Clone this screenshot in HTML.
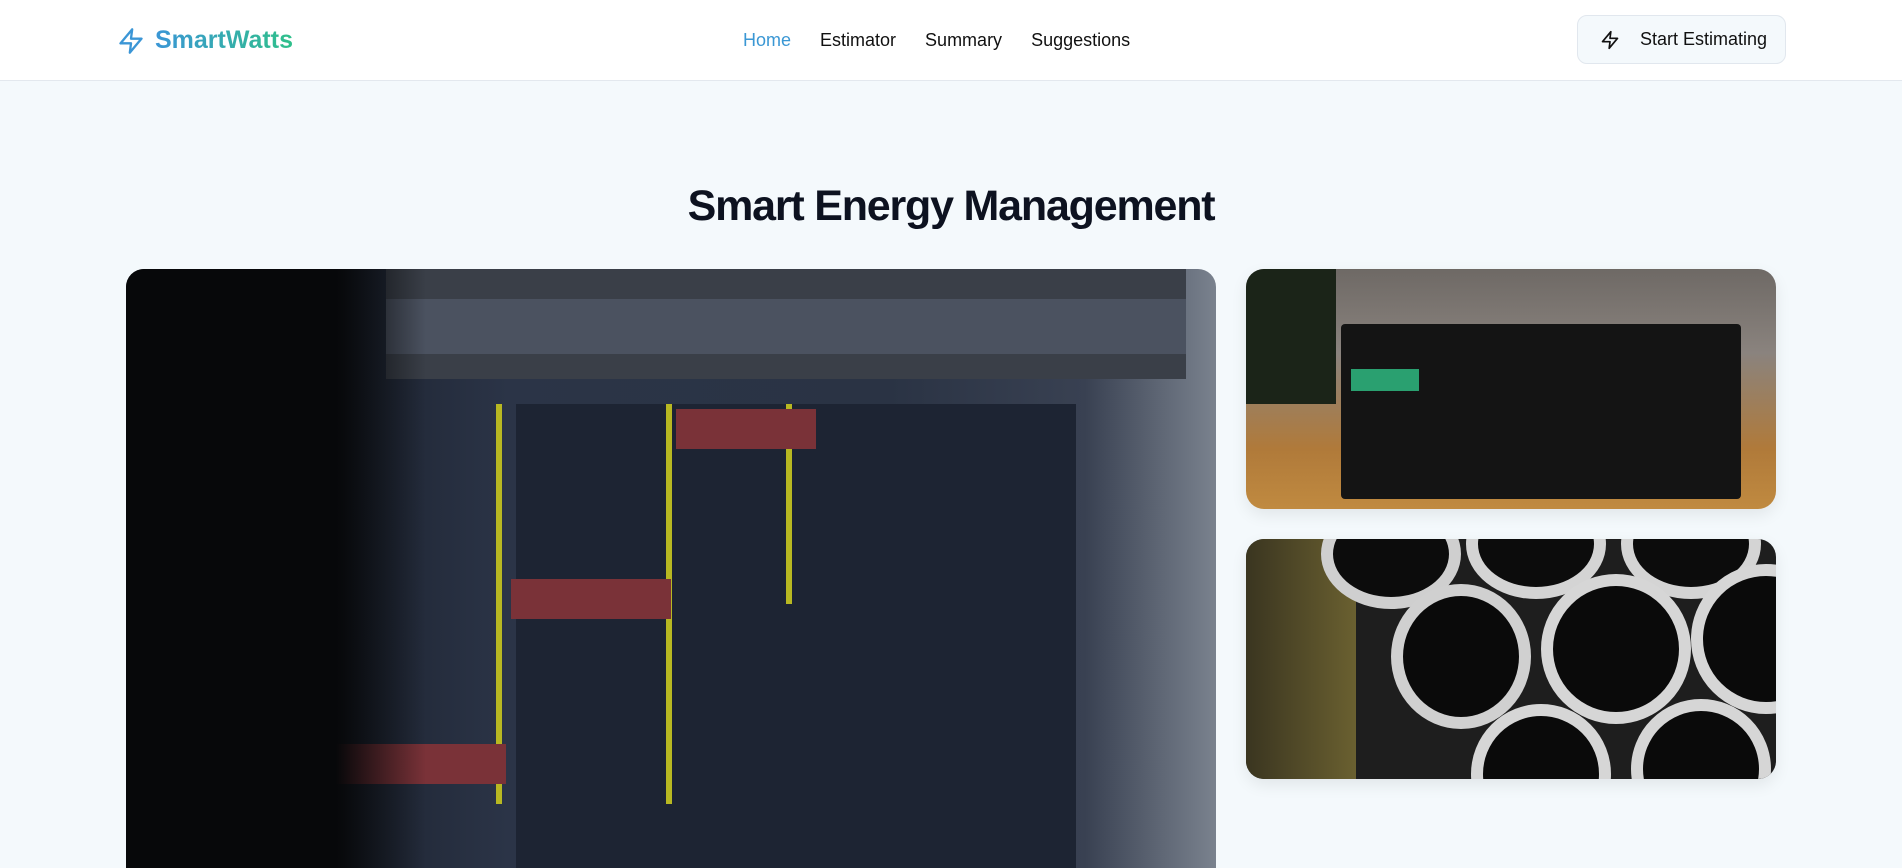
<!DOCTYPE html>
<html><head><meta charset="utf-8"><style>
*{margin:0;padding:0;box-sizing:border-box}
html,body{width:1902px;height:868px;overflow:hidden}
body{background:#f4f9fc;font-family:"Liberation Sans",sans-serif;position:relative}
.hdr{position:absolute;left:0;top:0;width:1902px;height:81px;background:#fff;border-bottom:1px solid #e3e8ee}
.logo{position:absolute;left:117px;top:26px;display:flex;align-items:center;gap:10px;font-weight:bold;font-size:25px}
.logo span{background:linear-gradient(90deg,#3b96d6,#2fc08a);-webkit-background-clip:text;color:transparent}
.nav{position:absolute;top:30px;left:743px;font-size:18px;color:#111;display:flex;gap:29px}
.nav .a{color:#3a97d4}
.btn{position:absolute;left:1577px;top:15px;width:209px;height:49px;border:1px solid #e1e7ee;border-radius:10px;background:#f4f9fc;display:flex;align-items:center;font-size:18px;color:#111}
.btn svg{margin-left:22px;margin-right:20px}
h1{position:absolute;top:182px;left:0;width:1902px;text-align:center;font-size:43px;font-weight:bold;color:#0d1220;letter-spacing:-1.2px}
.main{position:absolute;left:126px;top:269px;width:1090px;height:599px;border-radius:18px 18px 0 0;overflow:hidden;background:linear-gradient(90deg,#0a0c10 0%,#15191f 16%,#1f2634 22%,#2b3447 35%,#2a3344 70%,#394152 88%,#7a828e 100%)}
.r1,.r2{position:absolute;left:1246px;width:530px;height:240px;border-radius:18px;overflow:hidden;box-shadow:0 6px 16px rgba(0,0,0,.08)}
.r1{top:269px;background:linear-gradient(180deg,#6e6965 0%,#8a837e 35%,#b07a3a 75%,#c08a40 100%)}
.r2{top:539px;background:#1e1e1e}
</style></head><body>
<div class="hdr">
<div class="logo"><svg width="28" height="28" viewBox="0 0 24 24" fill="none" stroke="#3b96d6" stroke-width="2" stroke-linejoin="round"><path d="M13 2L3 14h9l-1 8 10-12h-9l1-8z"/></svg><span>SmartWatts</span></div>
<div class="nav"><span class="a">Home</span><span>Estimator</span><span>Summary</span><span>Suggestions</span></div>
<div class="btn"><svg width="20" height="20" viewBox="0 0 24 24" fill="none" stroke="#111" stroke-width="2" stroke-linejoin="round"><path d="M13 2L3 14h9l-1 8 10-12h-9l1-8z"/></svg>Start Estimating</div>
</div>
<h1>Smart Energy Management</h1>
<div class="main">
<div style="position:absolute;left:260px;top:0;width:800px;height:110px;background:#3a3f48"></div>
<div style="position:absolute;left:260px;top:30px;width:800px;height:55px;background:#4b5260"></div>
<div style="position:absolute;left:390px;top:135px;width:560px;height:500px;background:#1d2433"></div>
<div style="position:absolute;left:370px;top:135px;width:6px;height:400px;background:#b8b822"></div>
<div style="position:absolute;left:540px;top:135px;width:6px;height:400px;background:#b8b822"></div>
<div style="position:absolute;left:660px;top:135px;width:6px;height:200px;background:#b8b822"></div>
<div style="position:absolute;left:385px;top:310px;width:160px;height:40px;background:#7a3238"></div>
<div style="position:absolute;left:550px;top:140px;width:140px;height:40px;background:#7a3238"></div>
<div style="position:absolute;left:200px;top:475px;width:180px;height:40px;background:#7a3238"></div>
<div style="position:absolute;left:0;top:0;width:300px;height:620px;background:linear-gradient(90deg,#07080a 70%,rgba(7,8,10,0))"></div>
</div>
<div class="r1">
<div style="position:absolute;left:0;top:0;width:90px;height:135px;background:#1b2418"></div>
<div style="position:absolute;left:95px;top:55px;width:400px;height:175px;background:#141414;border-radius:4px"></div>
<div style="position:absolute;left:105px;top:100px;width:68px;height:22px;background:#2aa070"></div>
</div>
<div class="r2">
<div style="position:absolute;left:0;top:0;width:110px;height:240px;background:linear-gradient(90deg,#3a3520,#6a6030)"></div>
<div style="position:absolute;left:75px;top:-40px;width:140px;height:110px;border-radius:50%;border:12px solid #cfcfcf;background:#0c0c0c"></div>
<div style="position:absolute;left:220px;top:-50px;width:140px;height:110px;border-radius:50%;border:12px solid #d4d4d4;background:#0c0c0c"></div>
<div style="position:absolute;left:375px;top:-50px;width:140px;height:110px;border-radius:50%;border:12px solid #d4d4d4;background:#0c0c0c"></div>
<div style="position:absolute;left:145px;top:45px;width:140px;height:145px;border-radius:50%;border:12px solid #d0d0d0;background:#0a0a0a"></div>
<div style="position:absolute;left:295px;top:35px;width:150px;height:150px;border-radius:50%;border:12px solid #d6d6d6;background:#0a0a0a"></div>
<div style="position:absolute;left:445px;top:25px;width:150px;height:150px;border-radius:50%;border:12px solid #d6d6d6;background:#0a0a0a"></div>
<div style="position:absolute;left:225px;top:165px;width:140px;height:140px;border-radius:50%;border:12px solid #d6d6d6;background:#0a0a0a"></div>
<div style="position:absolute;left:385px;top:160px;width:140px;height:140px;border-radius:50%;border:12px solid #d6d6d6;background:#0a0a0a"></div>
</div>
</body></html>
